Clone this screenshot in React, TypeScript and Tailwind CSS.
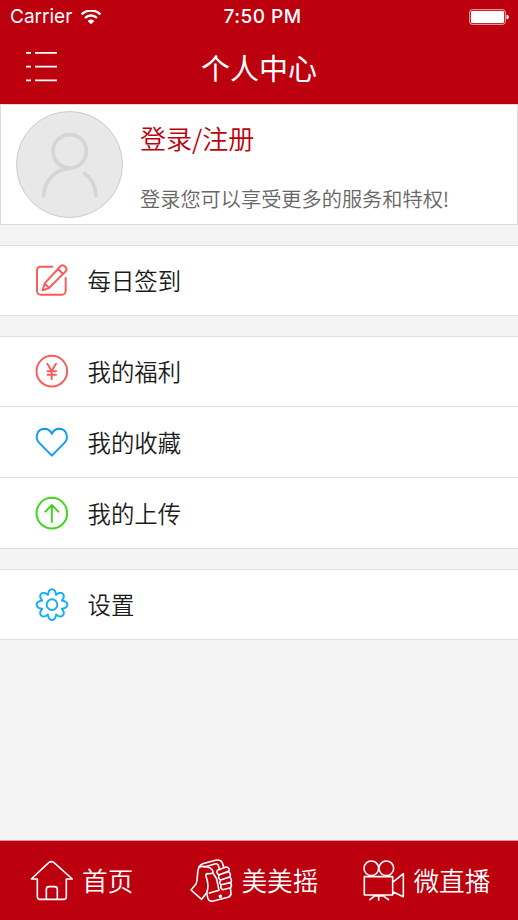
import type { ReactNode } from "react";

const cjk = "font-['Noto_Sans_CJK_SC',sans-serif]";

// Smooth eight-tooth outline for the settings gear
const gearPath =
  Array.from({ length: 240 }, (_, i) => {
    const t = (i / 240) * Math.PI * 2;
    const r = 39 + 7 * Math.cos(8 * t);
    // widen the teeth near the tip so they read as round knobs
    const a = t + 0.075 * Math.sin(8 * t);
    return `${i === 0 ? "M" : "L"}${(54 + r * Math.cos(a)).toFixed(1)} ${(53 + r * Math.sin(a)).toFixed(1)}`;
  }).join("") + "Z";

function RowIcon({ color, children }: { color: string; children: ReactNode }) {
  return (
    <svg
      className={`h-9 w-9 shrink-0 ${color}`}
      viewBox="0 0 108 108"
      fill="none"
      stroke="currentColor"
      strokeWidth="5.8"
      strokeLinecap="round"
      strokeLinejoin="round"
    >
      {children}
    </svg>
  );
}

function TabIcon({ children }: { children: ReactNode }) {
  return (
    <svg
      className="h-11 w-11 shrink-0 text-white"
      viewBox="0 0 132 132"
      fill="none"
      stroke="currentColor"
      strokeWidth="4.8"
      strokeLinejoin="round"
    >
      {children}
    </svg>
  );
}

const groups = [
  [
    {
      label: "每日签到",
      icon: (
        <RowIcon color="text-[#fa5a5a]">
          <path d="M55 11H20a11 11 0 0 0-11 11V84a11 11 0 0 0 11 11H84a11 11 0 0 0 11-11V45" />
          <path d="M26 82L32 61L80 9Q86 4 91 9L96 14Q100 20 95 25L45 75ZM72 18L87 33M32 61L45 75" />
        </RowIcon>
      ),
    },
  ],
  [
    {
      label: "我的福利",
      icon: (
        <RowIcon color="text-[#fa5a5a]">
          <circle cx="53.5" cy="51.5" r="46" />
          <path d="M40 29L53 51L66 29M53 51V75M41 52H66M41 62H66" />
        </RowIcon>
      ),
    },
    {
      label: "我的收藏",
      icon: (
        <RowIcon color="text-[#0c9cf4]">
          <path d="M53.5 95L15 56C3 43 7 15 31 14C43 14 50 21 53.5 30C57 21 64 14 76 14C100 15 104 43 92 56Z" />
        </RowIcon>
      ),
    },
    {
      label: "我的上传",
      icon: (
        <RowIcon color="text-[#3cd61c]">
          <circle cx="53.5" cy="54.5" r="46" />
          <path d="M53.5 81V31M34 50L53.5 30L73 50" />
        </RowIcon>
      ),
    },
  ],
  [
    {
      label: "设置",
      icon: (
        <RowIcon color="text-[#13aefa]">
          <path d={gearPath} />
          <circle cx="54" cy="53" r="16" />
        </RowIcon>
      ),
    },
  ],
];

function StatusBar() {
  return (
    <div className="grid h-[34px] grid-cols-[1fr_auto_1fr] items-center pr-[9px] pl-[10px] font-['Inter',sans-serif] text-white">
      <div className="flex items-center gap-[9px] text-[19px]">
        Carrier
        <svg className="h-[15px] w-5" viewBox="0 0 60 45" fill="none" stroke="currentColor" strokeWidth="7">
          <path d="M2 13C17 -2 43 -2 58 13M12 24C22 14 38 14 48 24" />
          <path d="M20 33C26 27 34 27 40 33L30 43Z" fill="currentColor" stroke="none" />
        </svg>
      </div>
      <div className="pl-[6px] text-[19px] font-medium tracking-[0.5px] whitespace-nowrap">7:50 PM</div>
      <svg className="h-4 w-10 justify-self-end" viewBox="0 0 40 16">
        <rect x="0.7" y="0.7" width="35.6" height="14.6" rx="2.5" fill="none" stroke="#f3b5ba" />
        <rect x="2" y="2" width="33" height="12" rx="1.2" fill="#fff" />
        <path d="M37.5 5.5Q40 6 40 8Q40 10 37.5 10.5Z" fill="#fff" />
      </svg>
    </div>
  );
}

function Header() {
  return (
    <header className="h-[104px] bg-[#bd000e]">
      <StatusBar />
      <div className="grid h-[66px] grid-cols-[1fr_auto_1fr] items-center px-[26px]">
        <svg className="h-[31px] w-[31px]" viewBox="0 0 31 31" stroke="#fff" strokeWidth="1.7">
          <path d="M0 0.9H5M9 0.9H31M0 14.6H5M9 14.6H31M0 28.4H5M9 28.4H31" />
        </svg>
        <h1 className={`${cjk} text-[29px] leading-none text-white`}>个人中心</h1>
      </div>
    </header>
  );
}

function Profile() {
  return (
    <section className="flex h-[121px] border border-[#dcdcdc] bg-white pt-[6px] pl-[15px]">
      <svg className="h-[107px] w-[107px] shrink-0" viewBox="0 0 321 321" fill="none" stroke="#d5d5d5">
        <circle cx="160.5" cy="160.5" r="159" fill="#e8e8e8" stroke="#d0c9c9" strokeWidth="3" />
        <circle cx="161" cy="121" r="50" strokeWidth="11" />
        <path d="M83 254C86 211 114 175 161 172M206 187Q238 211 240 254" strokeWidth="11" strokeLinecap="round" />
      </svg>
      <div className={`${cjk} ml-[17px] pt-[14px] font-[350]`}>
        <p className="text-[26px] leading-[26px] text-[#bd000e]">登录/注册</p>
        <p className="mt-[38px] text-[20.2px] leading-5 text-[#666]">登录您可以享受更多的服务和特权!</p>
      </div>
    </section>
  );
}

function TabBar() {
  return (
    <nav className={`${cjk} flex h-[80px] items-center border-t border-[#d99a9e] bg-[#bd000e] pl-[30px] text-[25.7px] font-[350] text-white`}>
      <div className="flex items-center gap-2">
        <TabIcon>
          <path d="M4 60L56 11Q64 5 72 11L127 60H109V113Q109 121 101 121H30Q22 121 22 113V60Z" />
          <path d="M49 121V91Q49 83 57 83H74Q82 83 82 91V121" />
        </TabIcon>
        首页
      </div>
      <div className="ml-[57px] flex items-center gap-[7px]">
        <TabIcon>
          <path d="M27 24Q30 17 38 14L76 4Q93 0 98 14L101 25" />
          <path d="M41 25L74 15Q84 12 86 22L88 30" />
          <path d="M27 24C19 42 25 61 18 75L3 93L35 121L50 101C57 84 53 65 48 52Q46 44 54 44C66 45 72 42 67 33C60 23 40 20 27 24Z" />
          <path d="M68 40L80 60L87 94L56 103M50 101L53 116Q57 129 70 126L114 115Q124 111 123 102L121 87" />
          <path d="M82 34L108 24Q120 25 117 36L88 47Q78 44 82 34ZM88 47L115 38Q124 43 120 53L92 63Q82 58 88 47ZM92 63L119 54Q127 61 123 70L94 77Q86 73 92 63ZM94 77L121 71Q127 78 122 86L98 92Q89 87 94 77Z" />
          <circle cx="91" cy="112" r="3" fill="currentColor" />
        </TabIcon>
        美美摇
      </div>
      <div className="ml-[44px] flex items-center gap-[7px]">
        <TabIcon>
          <circle cx="28" cy="28" r="22" />
          <circle cx="73" cy="28" r="22" />
          <path d="M7 53H92V108H7ZM92 70L124 44V113L92 98M35 111H68M50 108V125M36 112L22 123M66 112L81 123" />
        </TabIcon>
        微直播
      </div>
    </nav>
  );
}

export default function App() {
  return (
    <div className="flex h-[920px] w-[518px] flex-col overflow-hidden bg-[#f4f4f4]">
      <Header />
      <Profile />
      <main className="flex flex-1 flex-col gap-5 pt-5">
        {groups.map((rows, idx) => (
          <ul key={idx} className="border-t border-[#dedede] bg-white">
            {rows.map((row) => (
              <li
                key={row.label}
                className={`${cjk} flex h-[71px] items-center gap-[17.5px] border-b border-[#dedede] pl-[34px] text-[23.4px] font-[350] text-[#1c1c1c] first:h-[70px]`}
              >
                {row.icon}
                <span className="pt-px">{row.label}</span>
              </li>
            ))}
          </ul>
        ))}
      </main>
      <TabBar />
    </div>
  );
}
